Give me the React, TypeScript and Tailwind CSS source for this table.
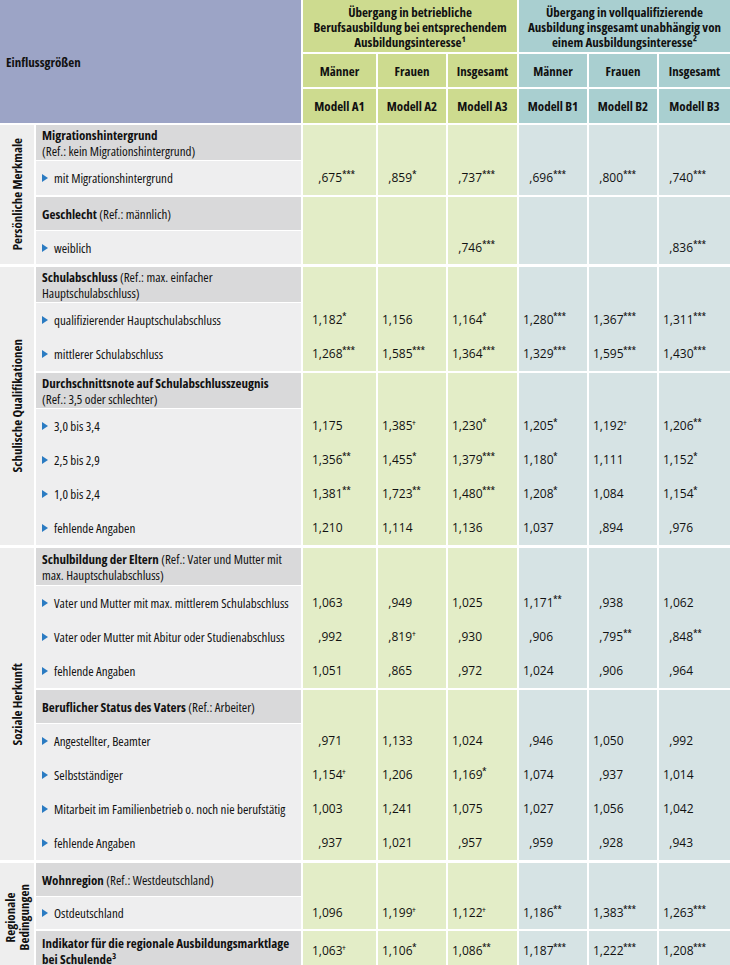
import type { ReactNode } from 'react';

type Row = {
  head?: boolean;
  label: ReactNode;
  values?: string[];
  h: string;
};

type Section = {
  title: ReactNode;
  groups: Row[][];
};

const sections: Section[] = [
  {
    title: 'Persönliche Merkmale',
    groups: [
      [
        {
          head: true,
          h: 'h-[36px]',
          label: (
            <>
              <b>Migrationshintergrund</b>
              <br />
              (Ref.: kein Migrationshintergrund)
            </>
          ),
        },
        { h: 'h-[34px]', label: 'mit Migrationshintergrund', values: [',675***', ',859*', ',737***', ',696***', ',800***', ',740***'] },
      ],
      [
        {
          head: true,
          h: 'h-[34px]',
          label: (
            <>
              <b>Geschlecht</b> (Ref.: männlich)
            </>
          ),
        },
        { h: 'h-[33px]', label: 'weiblich', values: ['', '', ',746***', '', '', ',836***'] },
      ],
    ],
  },
  {
    title: 'Schulische Qualifikationen',
    groups: [
      [
        {
          head: true,
          h: 'h-[36px]',
          label: (
            <>
              <b>Schulabschluss</b> (Ref.: max. einfacher
              <br />
              Hauptschulabschluss)
            </>
          ),
        },
        { h: 'h-[34px]', label: 'qualifizierender Hauptschulabschluss', values: ['1,182*', '1,156', '1,164*', '1,280***', '1,367***', '1,311***'] },
        { h: 'h-[34px]', label: 'mittlerer Schulabschluss', values: ['1,268***', '1,585***', '1,364***', '1,329***', '1,595***', '1,430***'] },
      ],
      [
        {
          head: true,
          h: 'h-[36px]',
          label: (
            <>
              <b>Durchschnittsnote auf Schulabschlusszeugnis</b>
              <br />
              (Ref.: 3,5 oder schlechter)
            </>
          ),
        },
        { h: 'h-[34px]', label: '3,0 bis 3,4', values: ['1,175', '1,385+', '1,230*', '1,205*', '1,192+', '1,206**'] },
        { h: 'h-[34px]', label: '2,5 bis 2,9', values: ['1,356**', '1,455*', '1,379***', '1,180*', '1,111', '1,152*'] },
        { h: 'h-[34px]', label: '1,0 bis 2,4', values: ['1,381**', '1,723**', '1,480***', '1,208*', '1,084', '1,154*'] },
        { h: 'h-[34px]', label: 'fehlende Angaben', values: ['1,210', '1,114', '1,136', '1,037', ',894', ',976'] },
      ],
    ],
  },
  {
    title: 'Soziale Herkunft',
    groups: [
      [
        {
          head: true,
          h: 'h-[38px]',
          label: (
            <>
              <b>Schulbildung der Eltern</b> (Ref.: Vater und Mutter mit
              <br />
              max. Hauptschulabschluss)
            </>
          ),
        },
        { h: 'h-[34px]', label: 'Vater und Mutter mit max. mittlerem Schulabschluss', values: ['1,063', ',949', '1,025', '1,171**', ',938', '1,062'] },
        { h: 'h-[34px]', label: 'Vater oder Mutter mit Abitur oder Studienabschluss', values: [',992', ',819+', ',930', ',906', ',795**', ',848**'] },
        { h: 'h-[34px]', label: 'fehlende Angaben', values: ['1,051', ',865', ',972', '1,024', ',906', ',964'] },
      ],
      [
        {
          head: true,
          h: 'h-[34px]',
          label: (
            <>
              <b>Beruflicher Status des Vaters</b> (Ref.: Arbeiter)
            </>
          ),
        },
        { h: 'h-[34px]', label: 'Angestellter, Beamter', values: [',971', '1,133', '1,024', ',946', '1,050', ',992'] },
        { h: 'h-[34px]', label: 'Selbstständiger', values: ['1,154+', '1,206', '1,169*', '1,074', ',937', '1,014'] },
        { h: 'h-[34px]', label: 'Mitarbeit im Familienbetrieb o. noch nie berufstätig', values: ['1,003', '1,241', '1,075', '1,027', '1,056', '1,042'] },
        { h: 'h-[34px]', label: 'fehlende Angaben', values: [',937', '1,021', ',957', ',959', ',928', ',943'] },
      ],
    ],
  },
  {
    title: (
      <>
        Regionale
        <br />
        Bedingungen
      </>
    ),
    groups: [
      [
        {
          head: true,
          h: 'h-[34px]',
          label: (
            <>
              <b>Wohnregion</b> (Ref.: Westdeutschland)
            </>
          ),
        },
        { h: 'h-[32px]', label: 'Ostdeutschland', values: ['1,096', '1,199+', '1,122+', '1,186**', '1,383***', '1,263***'] },
      ],
      [
        {
          head: true,
          h: 'h-[40px]',
          label: (
            <b>
              Indikator für die regionale Ausbildungsmarktlage
              <br />
              bei Schulende³
            </b>
          ),
          values: ['1,063+', '1,106*', '1,086**', '1,187***', '1,222***', '1,208***'],
        },
      ],
    ],
  },
];

const colBg = ['bg-[#e3edc7]', 'bg-[#e3edc7]', 'bg-[#e3edc7]', 'bg-[#d6e3e4]', 'bg-[#d6e3e4]', 'bg-[#d6e3e4]'];

const Value = ({ v, first }: { v: string; first: boolean }) => {
  if (!v) return null;
  const num = v.replace(/[*+]+$/, '');
  const mark = v.slice(num.length);
  return (
    <div className={`flex items-center ${first ? 'pl-[9px]' : 'pl-[4px]'}`}>
      <span className="w-[30px] text-right text-[12px] font-stretch-normal">{num}</span>
      {mark && (
        <span className={`relative ${mark === '+' ? '-top-[3px] text-[9px]' : '-top-[2px] text-[12px] tracking-[-0.5px]'}`}>
          {mark}
        </span>
      )}
    </div>
  );
};

const Triangle = () => (
  <svg width="6" height="8" viewBox="0 0 6 8" className="shrink-0">
    <polygon points="0,0 6,4 0,8" fill="#2a7bc2" />
  </svg>
);

const GroupRow = ({ row }: { row: Row }) => (
  <>
    {row.head ? (
      <div className={`${row.h} bg-[#d9d9da] border-b border-white flex items-center pl-[6px] leading-[16px]`}>
        <div>{row.label}</div>
      </div>
    ) : (
      <div className={`${row.h} bg-[#eeeeef] flex items-center gap-[6px] pl-[6px]`}>
        <Triangle />
        <span>{row.label}</span>
      </div>
    )}
    {colBg.map((bg, i) => (
      <div key={i} className={`${row.h} ${bg} flex items-center`}>
        <Value v={row.values ? row.values[i] : ''} first={i === 0} />
      </div>
    ))}
  </>
);

export default function App() {
  return (
    <div className="w-[730px] bg-white text-[13px] leading-[16px] font-medium text-[#111111] font-['Open_Sans',sans-serif] font-stretch-condensed">
      {/* Kopf */}
      <div className="grid grid-cols-[301px_73px_68px_69px_68px_68px_71px] gap-x-[2px] gap-y-[2px] font-bold">
        <div className="row-span-3 bg-[#9ca4c6] flex items-center pl-[6px]">Einflussgrößen</div>
        <div className="col-span-3 h-[52px] bg-[#cddb8f] flex items-center justify-center text-center leading-[15px] pt-[2px]">
          Übergang in betriebliche
          <br />
          Berufsausbildung bei entsprechendem
          <br />
          Ausbildungsinteresse¹
        </div>
        <div className="col-span-3 h-[52px] bg-[#a9cfd0] flex items-center justify-center text-center leading-[15px] pt-[2px]">
          Übergang in vollqualifizierende
          <br />
          Ausbildung insgesamt unabhängig von
          <br />
          einem Ausbildungsinteresse²
        </div>
        {['Männer', 'Frauen', 'Insgesamt', 'Männer', 'Frauen', 'Insgesamt'].map((t, i) => (
          <div key={i} className={`h-[33px] flex items-center justify-center ${i < 3 ? 'bg-[#cddb8f]' : 'bg-[#a9cfd0]'}`}>
            {t}
          </div>
        ))}
        {['Modell A1', 'Modell A2', 'Modell A3', 'Modell B1', 'Modell B2', 'Modell B3'].map((t, i) => (
          <div key={i} className={`h-[34px] flex items-center justify-center ${i < 3 ? 'bg-[#cddb8f]' : 'bg-[#a9cfd0]'}`}>
            {t}
          </div>
        ))}
      </div>

      {/* Rumpf */}
      <div className="flex flex-col gap-y-[3px] pt-[2px]">
        {sections.map((s, si) => (
          <div key={si} className="flex gap-x-[2px]">
            <div className="w-[34px] shrink-0 bg-[#eeeeee] flex items-center justify-center">
              <div className="[writing-mode:vertical-rl] rotate-180 font-bold text-center leading-[14px]">{s.title}</div>
            </div>
            <div className="flex flex-col gap-y-[2px]">
              {s.groups.map((g, gi) => (
                <div key={gi} className="grid grid-cols-[265px_73px_68px_69px_68px_68px_71px] gap-x-[2px]">
                  {g.map((row, ri) => (
                    <GroupRow key={ri} row={row} />
                  ))}
                </div>
              ))}
            </div>
          </div>
        ))}
      </div>
    </div>
  );
}
